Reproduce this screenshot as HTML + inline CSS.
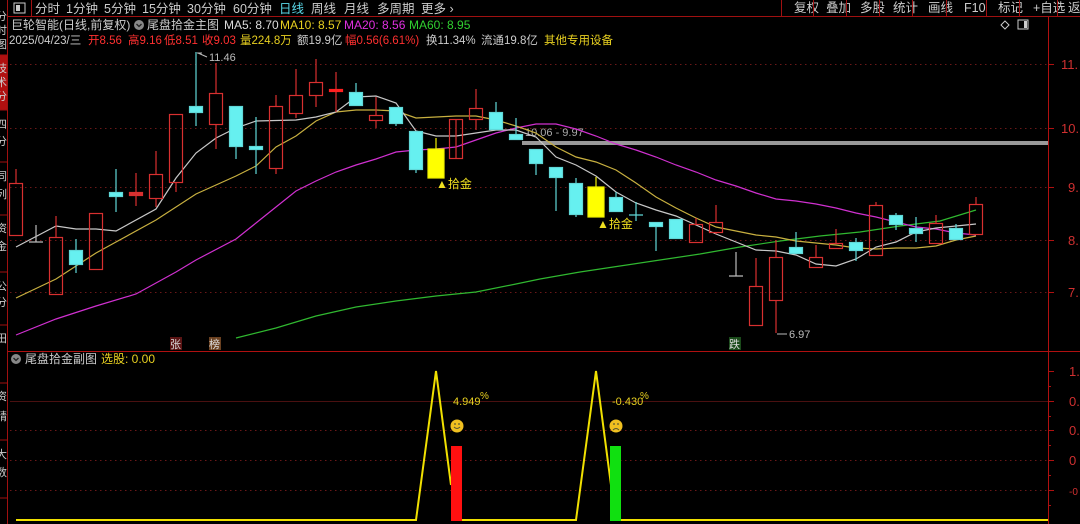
<!DOCTYPE html>
<html><head><meta charset="utf-8"><style>
body{margin:0;background:#000;width:1080px;height:524px;overflow:hidden;font-family:"Liberation Sans","Noto Sans CJK SC",sans-serif}
svg text{font-family:"Liberation Sans","Noto Sans CJK SC",sans-serif}
</style></head><body>
<svg width="1080" height="524" xmlns="http://www.w3.org/2000/svg" style="position:absolute;left:0;top:0">
<rect width="1080" height="524" fill="#000"/>
<!-- left sidebar -->
<rect x="0" y="55" width="7" height="55" fill="#b01010"/>
<line x1="7.5" y1="0" x2="7.5" y2="524" stroke="#a01010"/>
<g stroke="#a01010"><line x1="0" y1="55" x2="8" y2="55"/><line x1="0" y1="110" x2="8" y2="110"/><line x1="0" y1="162" x2="8" y2="162"/><line x1="0" y1="215" x2="8" y2="215"/><line x1="0" y1="272" x2="8" y2="272"/><line x1="0" y1="325" x2="8" y2="325"/><line x1="0" y1="383" x2="8" y2="383"/><line x1="0" y1="440" x2="8" y2="440"/><line x1="0" y1="498" x2="8" y2="498"/></g>
<g fill="#ccc" font-size="11"><text x="-4" y="20">分</text><text x="-4" y="34">时</text><text x="-4" y="48">图</text><text x="-4" y="72">技</text><text x="-4" y="86">术</text><text x="-4" y="100">分</text><text x="-4" y="128">四</text><text x="-4" y="145">分</text><text x="-4" y="180">同</text><text x="-4" y="198">列</text><text x="-4" y="232">资</text><text x="-4" y="250">金</text><text x="-4" y="290">公</text><text x="-4" y="306">分</text><text x="-4" y="342">田</text><text x="-4" y="400">资</text><text x="-4" y="420">精</text><text x="-4" y="458">大</text><text x="-4" y="476">数</text></g>
<!-- top bar -->
<line x1="8" y1="16.5" x2="1080" y2="16.5" stroke="#a01010"/>
<line x1="31.5" y1="0" x2="31.5" y2="16" stroke="#a01010"/>
<rect x="14" y="3" width="11" height="10" fill="none" stroke="#ccc"/><rect x="16" y="5" width="4" height="6" fill="#ccc"/>
<g font-size="12.5" fill="#ccc">
<text x="35" y="13">分时</text><text x="66" y="13">1分钟</text><text x="104" y="13">5分钟</text><text x="142" y="13">15分钟</text><text x="187" y="13">30分钟</text><text x="233" y="13">60分钟</text>
<text x="279" y="13" fill="#5ad8e8">日线</text><text x="311" y="13">周线</text><text x="344" y="13">月线</text><text x="377" y="13">多周期</text><text x="421" y="13">更多 ›</text>
<text x="794" y="12">复权</text><text x="826" y="12">叠加</text><text x="860" y="12">多股</text><text x="893" y="12">统计</text><text x="928" y="12">画线</text><text x="964" y="12">F10</text><text x="998" y="12">标记</text><text x="1033" y="12">+自选</text><text x="1068" y="12">返</text>
</g>
<g stroke="#a01010"><line x1="781.5" y1="0" x2="781.5" y2="16"/><line x1="813.5" y1="0" x2="813.5" y2="16"/><line x1="846.5" y1="0" x2="846.5" y2="16"/><line x1="879.5" y1="0" x2="879.5" y2="16"/><line x1="912.5" y1="0" x2="912.5" y2="16"/><line x1="946.5" y1="0" x2="946.5" y2="16"/><line x1="986.5" y1="0" x2="986.5" y2="16"/><line x1="1019.5" y1="0" x2="1019.5" y2="16"/><line x1="1057.5" y1="0" x2="1057.5" y2="16"/></g>
<!-- header info -->
<g font-size="12">
<text x="11" y="29" fill="#ccc">巨轮智能(日线,前复权)</text>
<circle cx="139" cy="25" r="5" fill="#888"/><path d="M136.5 24 l2.5 2.5 l2.5-2.5" stroke="#222" fill="none" stroke-width="1.3"/>
<text x="147" y="29" fill="#ccc">尾盘拾金主图</text>
<text x="224" y="29" fill="#ddd">MA5: 8.70</text><text x="280" y="29" fill="#e8d020">MA10: 8.57</text><text x="344" y="29" fill="#e030e0">MA20: 8.56</text><text x="409" y="29" fill="#30d030">MA60: 8.95</text>
</g>
<g font-size="11.5">
<text x="9" y="44" fill="#ccc">2025/04/23/三</text>
<text x="88" y="44" fill="#ff3030">开8.56</text>
<text x="128" y="44" fill="#ff3030">高9.16</text>
<text x="164" y="44" fill="#ff3030">低8.51</text>
<text x="202" y="44" fill="#ff3030">收9.03</text>
<text x="240" y="44" fill="#e8d020">量224.8万</text>
<text x="297" y="44" fill="#ccc">额19.9亿</text>
<text x="345" y="44" fill="#ff3030">幅0.56(6.61%)</text>
<text x="426" y="44" fill="#ccc">换11.34%</text>
<text x="481" y="44" fill="#ccc">流通19.8亿</text>
<text x="544" y="44" fill="#e8d020">其他专用设备</text>
</g>
<path d="M1005 21 l4 4 l-4 4 l-4 -4z" fill="none" stroke="#ccc"/>
<rect x="1018" y="20" width="10" height="9" fill="none" stroke="#ccc"/><rect x="1024" y="21" width="3" height="7" fill="#ccc"/>
<!-- axes -->
<line x1="1048.5" y1="17" x2="1048.5" y2="524" stroke="#b01010"/>
<line x1="8" y1="351.5" x2="1080" y2="351.5" stroke="#b01010"/>
<g stroke="#6a1818" stroke-dasharray="1.5,3.5"><line x1="10" y1="64.5" x2="1048" y2="64.5"/><line x1="10" y1="128.5" x2="1048" y2="128.5"/><line x1="10" y1="187.5" x2="1048" y2="187.5"/><line x1="10" y1="240.5" x2="1048" y2="240.5"/><line x1="10" y1="292.5" x2="1048" y2="292.5"/>
<line x1="10" y1="430.5" x2="1048" y2="430.5"/><line x1="10" y1="460.5" x2="1048" y2="460.5"/><line x1="10" y1="490.5" x2="1048" y2="490.5"/></g>
<line x1="10" y1="401.5" x2="1048" y2="401.5" stroke="#4a1010"/>
<g stroke="#b01010"><line x1="1048" y1="64.5" x2="1054" y2="64.5"/><line x1="1048" y1="128.5" x2="1054" y2="128.5"/><line x1="1048" y1="187.5" x2="1054" y2="187.5"/><line x1="1048" y1="240.5" x2="1054" y2="240.5"/><line x1="1048" y1="292.5" x2="1054" y2="292.5"/>
<line x1="1048" y1="371.5" x2="1054" y2="371.5"/><line x1="1048" y1="401.5" x2="1054" y2="401.5"/><line x1="1048" y1="430.5" x2="1054" y2="430.5"/><line x1="1048" y1="460.5" x2="1054" y2="460.5"/><line x1="1048" y1="490.5" x2="1054" y2="490.5"/>
<line x1="1048" y1="386.5" x2="1051" y2="386.5"/><line x1="1048" y1="416.5" x2="1051" y2="416.5"/><line x1="1048" y1="445.5" x2="1051" y2="445.5"/><line x1="1048" y1="475.5" x2="1051" y2="475.5"/><line x1="1048" y1="505.5" x2="1051" y2="505.5"/></g>
<g fill="#d03030" font-size="13"><text x="1061" y="69">11.</text><text x="1061" y="133">10.</text><text x="1068" y="192">9.</text><text x="1068" y="245">8.</text><text x="1068" y="297">7.</text>
<text x="1069" y="376">1.</text><text x="1069" y="406">0.</text><text x="1069" y="435">0.</text><text x="1069" y="465">0</text><text x="1069" y="495" font-size="10">-0</text></g>
<!-- gray bar -->
<rect x="522" y="141" width="526" height="4" fill="#999"/>
<text x="525" y="136" fill="#aaa" font-size="11">10.06 - 9.97</text>
<!-- MA lines -->
<g fill="none" stroke-width="1.2">
<polyline stroke="#30b830" points="236,338 276,328 316,316 356,307 396,301 436,296 476,292 516,284 540,279 580,272 620,266 660,260 700,254 740,247 780,241 820,236 860,232 900,226 940,221 976,210"/>
<polyline stroke="#d030d0" points="16,335 56,319 96,306 136,294 156,283 176,272 196,260 236,239 256,223 276,207 296,191 316,181 336,172 356,165 376,159 396,152 416,150 436,149 456,147 476,140 496,133 516,128 536,124 556,124 576,129 596,136 616,144 636,150 656,157 676,165 696,172 716,180 736,186 756,193 776,199 796,201 816,204 836,208 856,213 876,217 896,222 916,227 936,229 956,233 976,235"/>
<polyline stroke="#c8b040" points="16,298 56,279 96,253 116,242 156,220 196,194 236,176 256,166 276,147 296,136 316,121 336,112 356,110 376,110 396,111 416,118 456,116 476,116 496,120 516,126 536,133 556,147 576,157 596,162 616,170 636,183 656,197 676,208 696,218 716,227 756,235 776,237 796,241 816,243 836,245 856,248 876,249 896,248 916,248 936,246 956,240 976,236"/>
<polyline stroke="#c8c8c8" points="16,247 56,226 76,229 96,229 116,231 156,209 176,178 196,153 216,138 236,128 256,121 296,120 316,117 336,112 356,97 376,96 396,103 416,131 436,136 456,136 476,133 496,130 516,130 536,137 556,157 576,165 596,176 616,192 636,203 656,210 676,216 696,225 716,234 736,242 756,250 776,251 796,255 816,264 836,266 856,259 876,247 896,242 916,232 936,228 956,226 976,224"/>
</g>
<!-- candles -->
<g stroke-width="1.2">
<g stroke="#d83030" fill="none">
<path d="M16 169V183"/><rect x="9.5" y="183.5" width="13" height="52"/>
<path d="M56 216V237"/><rect x="49.5" y="237.5" width="13" height="57"/>
<rect x="89.5" y="213.5" width="13" height="56"/>
<path d="M136 173V206"/><rect x="129.5" y="192.5" width="13" height="3" fill="#d83030"/>
<path d="M156 151V174M156 198V207"/><rect x="149.5" y="174.5" width="13" height="24"/>
<path d="M176 182V192"/><rect x="169.5" y="114.5" width="13" height="68"/>
<path d="M216 63V93M216 124V149"/><rect x="209.5" y="93.5" width="13" height="31"/>
<path d="M276 95V106M276 168V174"/><rect x="269.5" y="106.5" width="13" height="62"/>
<path d="M296 69V95M296 113V118"/><rect x="289.5" y="95.5" width="13" height="18"/>
<path d="M316 59V82M316 95V107"/><rect x="309.5" y="82.5" width="13" height="13"/>
<path d="M336 72V112"/><rect x="329.5" y="89.5" width="13" height="2" fill="#ff2020" stroke="#ff2020"/>
<path d="M376 97V115M376 120V128"/><rect x="369.5" y="115.5" width="13" height="5"/>
<path d="M456 119V158"/><rect x="449.5" y="119.5" width="13" height="39"/>
<path d="M476 89V108M476 119V130"/><rect x="469.5" y="108.5" width="13" height="11"/>
<path d="M696 218V224"/><rect x="689.5" y="224.5" width="13" height="18"/>
<path d="M716 205V222M716 232V234"/><rect x="709.5" y="222.5" width="13" height="10"/>
<path d="M756 258V286"/><rect x="749.5" y="286.5" width="13" height="39"/>
<path d="M776 240V257M776 300V333"/><rect x="769.5" y="257.5" width="13" height="43"/>
<path d="M816 245V257"/><rect x="809.5" y="257.5" width="13" height="10"/>
<path d="M836 229V243"/><rect x="829.5" y="243.5" width="13" height="5"/>
<path d="M876 202V205"/><rect x="869.5" y="205.5" width="13" height="50"/>
<path d="M936 215V223"/><rect x="929.5" y="223.5" width="13" height="20"/>
<path d="M976 197V204"/><rect x="969.5" y="204.5" width="13" height="30"/>
</g>
<g stroke="#bbb"><path d="M36 225V242M29 242H43"/><path d="M736 252V276M729 276H743"/></g>
<g stroke="#60d8d8" fill="#66f0f0">
<path d="M76 239V273"/><rect x="69.5" y="250.5" width="13" height="14"/>
<path d="M116 169V212"/><rect x="109.5" y="192.5" width="13" height="4"/>
<path d="M196 52V126"/><rect x="189.5" y="106.5" width="13" height="6"/>
<path d="M236 146V159"/><rect x="229.5" y="106.5" width="13" height="40"/>
<path d="M256 117V174"/><rect x="249.5" y="146.5" width="13" height="3"/>
<path d="M356 83V92"/><rect x="349.5" y="92.5" width="13" height="13"/>
<path d="M396 123V126"/><rect x="389.5" y="107.5" width="13" height="16"/>
<path d="M416 169V173"/><rect x="409.5" y="131.5" width="13" height="38"/>
<path d="M496 102V112"/><rect x="489.5" y="112.5" width="13" height="17"/>
<path d="M516 118V139"/><rect x="509.5" y="134.5" width="13" height="5"/>
<path d="M536 163V175"/><rect x="529.5" y="149.5" width="13" height="14"/>
<path d="M556 177V211"/><rect x="549.5" y="167.5" width="13" height="10"/>
<path d="M576 178V217"/><rect x="569.5" y="183.5" width="13" height="31"/>
<path d="M616 192V197"/><rect x="609.5" y="197.5" width="13" height="14"/>
<path d="M636 202V221M629 215H643"/>
<path d="M656 226V251"/><rect x="649.5" y="222.5" width="13" height="4"/>
<rect x="669.5" y="219.5" width="13" height="19"/>
<path d="M796 232V247"/><rect x="789.5" y="247.5" width="13" height="6"/>
<path d="M856 238V261"/><rect x="849.5" y="242.5" width="13" height="8"/>
<path d="M896 213V230"/><rect x="889.5" y="215.5" width="13" height="9"/>
<path d="M916 217V242"/><rect x="909.5" y="228.5" width="13" height="5"/>
<path d="M956 224V239"/><rect x="949.5" y="228.5" width="13" height="11"/>
</g>
<g stroke="#f0f000" fill="#ffff00"><path d="M436 138V149"/><rect x="428" y="149" width="16" height="29"/><path d="M596 177V187"/><rect x="588" y="187" width="16" height="30"/></g>
</g>
<!-- annotations -->
<path d="M197 53H202M198 53L207 57" stroke="#bbb" fill="none"/>
<text x="209" y="61" fill="#bbb" font-size="11">11.46</text>
<path d="M777 334H787" stroke="#bbb"/><text x="789" y="338" fill="#bbb" font-size="11">6.97</text>
<text x="436" y="188" fill="#f0e020" font-size="12">▲拾金</text>
<text x="597" y="228" fill="#f0e020" font-size="12">▲拾金</text>
<rect x="170" y="337" width="12" height="13" fill="#5a1414"/><text x="170" y="348" fill="#ddd" font-size="11">张</text>
<rect x="209" y="337" width="12" height="13" fill="#6a4020"/><text x="209" y="348" fill="#ddd" font-size="11">榜</text>
<rect x="729" y="337" width="12" height="13" fill="#1a4a1a"/><text x="729" y="348" fill="#ddd" font-size="11">跌</text>
<!-- sub chart -->
<circle cx="16" cy="359" r="5" fill="#888"/><path d="M13.5 358 l2.5 2.5 l2.5-2.5" stroke="#222" fill="none" stroke-width="1.3"/>
<text x="25" y="363" fill="#ccc" font-size="12">尾盘拾金副图</text>
<text x="101" y="363" fill="#e8d020" font-size="12">选股: 0.00</text>
<polyline fill="none" stroke="#f0e000" stroke-width="2" points="16,520 416,520 436,371 451,485"/>
<polyline fill="none" stroke="#f0e000" stroke-width="2" points="462,520 576,520 596,371 611,485"/>
<line x1="621" y1="520" x2="1048" y2="520" stroke="#f0e000" stroke-width="2"/>
<rect x="451" y="446" width="11" height="75" fill="#ff1010"/>
<rect x="610" y="446" width="11" height="75" fill="#10e010"/>
<text x="453" y="405" fill="#e8d020" font-size="11">4.949</text><text x="480" y="399" fill="#e8d020" font-size="10">%</text>
<text x="612" y="405" fill="#e8d020" font-size="11">-0.430</text><text x="640" y="399" fill="#e8d020" font-size="10">%</text>
<circle cx="457" cy="426" r="6.5" fill="#f0c020"/><circle cx="455" cy="424" r=".9" fill="#553"/><circle cx="459" cy="424" r=".9" fill="#553"/><path d="M454 427q3 3 6 0" stroke="#553" fill="none"/>
<circle cx="616" cy="426" r="6.5" fill="#f0c020"/><circle cx="614" cy="424" r=".9" fill="#553"/><circle cx="618" cy="424" r=".9" fill="#553"/><path d="M613 430q3-3 6 0" stroke="#553" fill="none"/>
</svg>
</body></html>
